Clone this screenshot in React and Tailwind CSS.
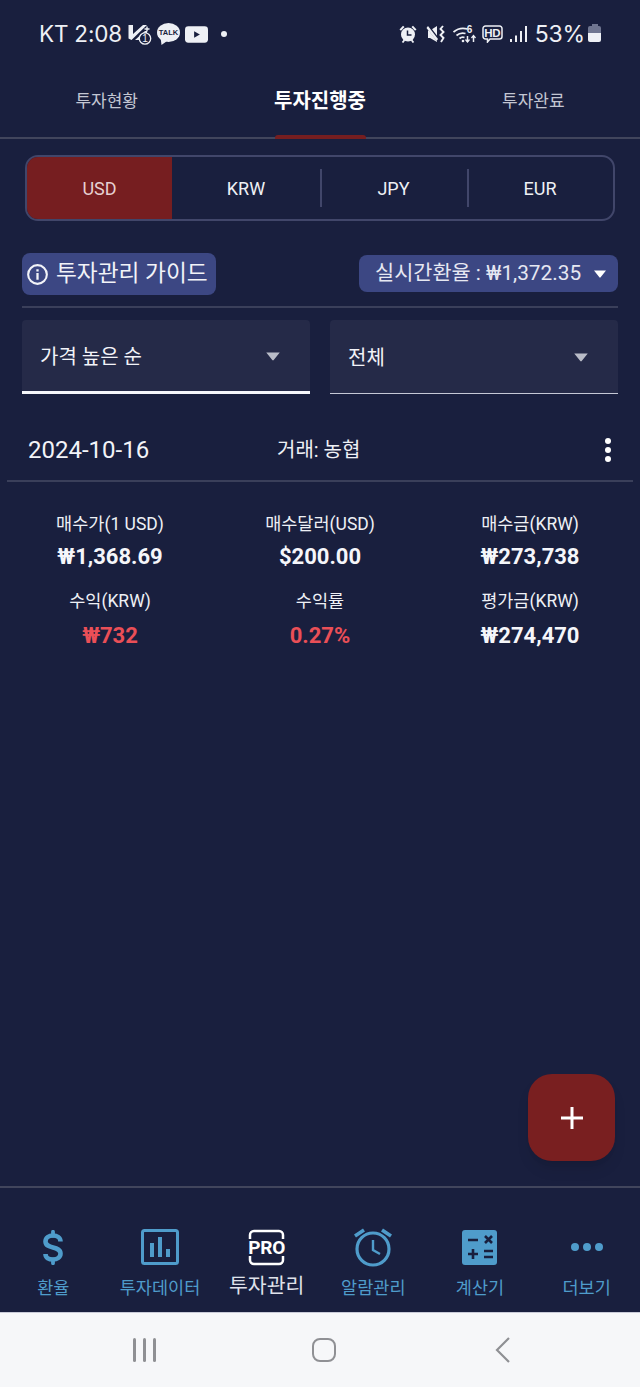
import React from 'react';

const FONT = 'font-[Roboto,"Noto_Sans_CJK_KR",sans-serif]';

const metrics = [
    { label: '매수가(1 USD)', value: '₩1,368.69' },
    { label: '매수달러(USD)', value: '$200.00' },
    { label: '매수금(KRW)', value: '₩273,738' },
    { label: '수익(KRW)', value: '₩732', red: true, low: true },
    { label: '수익률', value: '0.27%', red: true, low: true },
    { label: '평가금(KRW)', value: '₩274,470', low: true },
];

const Caret = ({ className }) => (
    <svg viewBox="0 0 16 10" className={className}>
        <path d="M0.5 0.5h15L8.8 9a1 1 0 0 1-1.6 0z" fill="currentColor" />
    </svg>
);

const StatusBar = () => (
    <div className="h-[68px] flex items-center pl-[39px] pr-[39px] text-[#eef0f5]">
        <span className="text-[22.500px] leading-none font-['Inter',sans-serif] tracking-[-0.2px] w-[89px] whitespace-nowrap">KT 2:08</span>
        {/* missed call style icon */}
        <div className="relative w-[24px] h-[21px] mt-[1px]">
            <svg viewBox="0 0 24 21" className="w-[24px] h-[21px]">
                <path d="M0.500 1h4.500v9L15 1h4L3.500 16 0.500 14.500z" fill="#eef0f5" />
                <path d="M7 16L17 7h2v3l-7 6z" fill="#eef0f5" />
                <path d="M19 2.500v5M16.500 5h5" stroke="#eef0f5" strokeWidth="1.400" />
                <circle cx="17" cy="14.500" r="5.700" fill="#191f3e" stroke="#eef0f5" strokeWidth="1.300" />
            </svg>
            <span className="absolute left-[14px] top-[9px] w-[6px] text-center text-[10px] leading-[11px] font-['Liberation_Sans',sans-serif]">1</span>
        </div>
        {/* kakao talk bubble */}
        <div className="relative w-[23px] h-[22px] ml-[5px]">
            <svg viewBox="0 0 23 22" className="w-[23px] h-[22px]">
                <ellipse cx="11.500" cy="9.500" rx="11.500" ry="9.500" fill="#eef0f5" />
                <path d="M3.500 14l1 8 7-5z" fill="#eef0f5" />
            </svg>
            <span className="absolute left-0 right-0 top-[5px] text-center text-[7.500px] leading-[9px] font-bold text-[#191f3e] font-['Liberation_Sans',sans-serif]">TALK</span>
        </div>
        {/* youtube */}
        <svg viewBox="0 0 24 17" className="w-[23px] h-[17px] ml-[5px]">
            <rect width="24" height="17" rx="3.500" fill="#eef0f5" />
            <path d="M9.500 5l6 3.500-6 3.500z" fill="#191f3e" />
        </svg>
        <div className="w-[6px] h-[6px] rounded-full bg-[#eef0f5] ml-[13px]" />

        <div className="ml-auto flex items-center">
            {/* alarm */}
            <svg viewBox="0 0 18 18" className="w-[18px] h-[18px]">
                <circle cx="9" cy="9.500" r="7" fill="#eef0f5" />
                <path d="M0.500 4.500L4 0.800 5.500 2 2 5.800zM17.500 4.500L14 0.800 12.500 2 16 5.800z" fill="#eef0f5" />
                <path d="M3.500 17.500l2-2.500M14.500 17.500l-2-2.500" stroke="#eef0f5" strokeWidth="1.800" />
                <path d="M8.500 5.500v4.500h4" stroke="#191f3e" strokeWidth="1.500" fill="none" />
            </svg>
            {/* vibrate mute */}
            <svg viewBox="0 0 20 18" className="w-[20px] h-[18px] ml-[9px]">
                <path d="M2 5.500h2L11 1v16l-7-4H2z" fill="#eef0f5" />
                <path d="M1 0.500l12 15.500" stroke="#191f3e" strokeWidth="3.500" />
                <path d="M0.500 3l1.500-2 10 13-1.500 2z" fill="#eef0f5" />
                <path d="M17 1l-2.500 3 3 3-3 3 3 3-2.500 4" stroke="#eef0f5" strokeWidth="1.900" fill="none" />
            </svg>
            {/* wifi */}
            <div className="relative w-[23px] h-[18px] ml-[7px]">
                <svg viewBox="0 0 23 18" className="w-[23px] h-[18px]">
                    <path d="M0.500 7a15 15 0 0 1 14-3M3.500 10.500a9.500 9.500 0 0 1 9-2M6.500 13.500a5 5 0 0 1 5-1" stroke="#eef0f5" strokeWidth="1.700" fill="none" />
                    <circle cx="10" cy="16" r="1.300" fill="#eef0f5" />
                    <path d="M14.500 11v6M20.500 17v-6" stroke="#eef0f5" strokeWidth="1.500" />
                    <path d="M12.500 14.500l2 2.500 2-2.500M18.500 13l2-2.500 2 2.500" stroke="#eef0f5" strokeWidth="1.300" fill="none" />
                </svg>
                <span className="absolute left-[14px] top-[-1px] text-[10px] leading-[11px] font-bold font-['Liberation_Sans',sans-serif]">6</span>
            </div>
            {/* hd */}
            <div className="relative w-[21px] h-[18px] ml-[6px]">
                <svg viewBox="0 0 21 18" className="w-[21px] h-[18px]">
                    <path d="M3.500 1h14a2.500 2.500 0 0 1 2.500 2.500v8a2.500 2.500 0 0 1-2.500 2.500H8l-2.500 3v-3h-2A2.500 2.500 0 0 1 1 11.500v-8A2.500 2.500 0 0 1 3.500 1z" stroke="#eef0f5" strokeWidth="1.500" fill="none" />
                </svg>
                <span className="absolute left-0 right-0 top-[2px] text-center text-[11.500px] leading-[12px] font-bold tracking-[-0.3px] font-['Liberation_Sans',sans-serif]">HD</span>
            </div>
            {/* signal */}
            <svg viewBox="0 0 18 18" className="w-[18px] h-[18px] ml-[6px]">
                <path d="M1 14h2v3H1zM6 10.500h2V17H6zM11 6h2v11h-2zM16 1h2v16h-2z" fill="#eef0f5" />
            </svg>
            <span className="text-[23px] leading-none font-['Inter',sans-serif] tracking-[-0.2px] ml-[8px]">53%</span>
            <div className="w-[13px] h-[20px] ml-[3px] flex flex-col items-center">
                <div className="w-[6px] h-[2px] bg-[#6f7590]" />
                <div className="w-[13px] h-[7px] bg-[#6f7590] rounded-t-[2px]" />
                <div className="w-[13px] h-[9px] bg-[#eef0f5] rounded-b-[2px]" />
            </div>
        </div>
    </div>
);

const TopTabs = () => (
    <div className="h-[71px] grid grid-cols-3 border-b-2 border-[#41455c]">
        <div className="flex items-center justify-center pb-[1px] text-[17px] text-[#c3c6d2]">투자현황</div>
        <div className="relative flex items-center justify-center pb-[3px] text-[20px] font-bold text-white">
            투자진행중
            <div className="absolute left-[62px] -bottom-[2px] w-[91px] h-[4px] rounded-t-[3px] bg-[#761e20]" />
        </div>
        <div className="flex items-center justify-center pb-[1px] text-[17px] text-[#c3c6d2]">투자완료</div>
    </div>
);

const CurrencyTabs = () => (
    <div className="mt-[16px] mx-[25px] h-[66px] rounded-[13px] border-2 border-[#41466a] overflow-hidden grid grid-cols-[145px_148px_147px_146px] text-[18px]">
        <div className="bg-[#761e20] text-[#e6d0d1] flex items-center justify-center">USD</div>
        <div className="flex items-center justify-center text-[#eef0f5]">KRW</div>
        <div className="flex items-center justify-center text-[#eef0f5] relative">
            JPY
            <div className="absolute left-0 top-[12px] bottom-[12px] w-[2px] bg-[#41466a]" />
        </div>
        <div className="flex items-center justify-center text-[#eef0f5] relative">
            EUR
            <div className="absolute left-0 top-[12px] bottom-[12px] w-[2px] bg-[#41466a]" />
        </div>
    </div>
);

const GuideRow = () => (
    <div className="mt-[32px] mx-[22px] h-[55px] flex items-start justify-between border-b-2 border-[#3a3f5a]">
        <div className="h-[42px] w-[194px] rounded-[8px] bg-[#3c4783] flex items-center pl-[5px] text-[22.700px] text-[#f2f3f8] whitespace-nowrap">
            <svg viewBox="0 0 22 22" className="w-[21px] h-[21px] mr-[8px] shrink-0">
                <circle cx="11" cy="11" r="9.800" fill="none" stroke="#f2f3f8" strokeWidth="2.200" />
                <path d="M9.800 9.500h2.400v7H9.800zM9.800 5.500h2.400v2.400H9.800z" fill="#f2f3f8" />
            </svg>
            투자관리 가이드
        </div>
        <div className="mt-[2px] h-[37px] w-[259px] rounded-[8px] bg-[#3c4783] flex items-center pl-[16px] text-[20.800px] text-[#e6e8f2] whitespace-nowrap">
            실시간환율 : ₩1,372.35
            <Caret className="w-[14px] h-[8px] ml-[12px] text-white" />
        </div>
    </div>
);

const Filter = ({ label, active }) => (
    <div className={`h-[74px] rounded-t-[4px] bg-[#252a48] flex items-center justify-between pt-[2px] pl-[18px] pr-[29px] text-[20px] text-[#f2f3f8] ${active ? 'border-b-[3px] border-[#f5f6fa]' : 'border-b-[1.5px] border-[#c5c8d6]'}`}>
        <span>{label}</span>
        <Caret className="w-[16px] h-[9px] text-[#b9bcc8]" />
    </div>
);

const TradeCard = () => (
    <div>
        <div className="h-[88px] mx-[7px] flex items-center border-b-2 border-[#3a3f5a] pt-[26px]">
            <span className="pl-[21px] text-[24px] text-[#f2f3f8] w-[270px]">2024-10-16</span>
            <span className="text-[20px] text-[#eef0f5]">거래: 농협</span>
            <div className="ml-auto mr-[22px] flex flex-col gap-[3px]">
                <div className="w-[6px] h-[6px] rounded-full bg-white" />
                <div className="w-[6px] h-[6px] rounded-full bg-white" />
                <div className="w-[6px] h-[6px] rounded-full bg-white" />
            </div>
        </div>
        <div className="mt-[29px] px-[5px] grid grid-cols-3 gap-y-[17px]">
            {metrics.map((m) => (
                <div key={m.label} className="flex flex-col items-center">
                    <span className="text-[17.500px] leading-[26px] text-[#eef0f5]">{m.label}</span>
                    <span className={`${m.low ? 'mt-[8px]' : 'mt-[6px]'} text-[22px] leading-[28px] font-bold ${m.red ? 'text-[#ea4f57]' : 'text-[#f5f6fa]'}`}>{m.value}</span>
                </div>
            ))}
        </div>
    </div>
);

const BLUE = '#4f9ccb';

const navItems = [
    {
        label: '환율',
        icon: (
            <svg viewBox="0 0 20 35" className="w-[20px] h-[35px]">
                <path d="M10 1.800v4M10 29.500v3.700" stroke={BLUE} strokeWidth="3.800" strokeLinecap="round" />
                <path d="M17.500 11.500C17.500 7.500 14 5.500 10 5.500S2.500 7.500 2.500 11.500 6 16.500 10 17.500 17.500 19.500 17.500 23.500 14 29.500 10 29.500 2.500 28 2.500 24" fill="none" stroke={BLUE} strokeWidth="4.600" />
            </svg>
        ),
    },
    {
        label: '투자데이터',
        icon: (
            <svg viewBox="0 0 38 36" className="w-[38px] h-[36px]">
                <rect x="1.500" y="1.500" width="35" height="33" rx="2" fill="none" stroke={BLUE} strokeWidth="3" />
                <path d="M9 14h4v14H9zM17 8h4v20h-4zM25 20h4v8h-4z" fill={BLUE} />
            </svg>
        ),
    },
    {
        label: '투자관리',
        active: true,
        icon: (
            <div className="relative w-[37px] h-[37px]">
                <svg viewBox="0 0 37 37" className="w-[37px] h-[37px]">
                    <path d="M2 10V6a4 4 0 0 1 4-4h25a4 4 0 0 1 4 4v4M2 27v4a4 4 0 0 0 4 4h25a4 4 0 0 0 4-4v-4" fill="none" stroke="#fff" strokeWidth="2.500" />
                </svg>
                <span className="absolute left-[-3px] right-[-3px] top-[8px] text-center text-[19px] leading-[21px] font-bold text-white tracking-[-0.2px]">PRO</span>
            </div>
        ),
    },
    {
        label: '알람관리',
        icon: (
            <svg viewBox="0 0 40 40" className="w-[40px] h-[40px]">
                <circle cx="20" cy="22" r="16" fill="none" stroke={BLUE} strokeWidth="3.200" />
                <path d="M2 9l9-6M38 9l-9-6" stroke={BLUE} strokeWidth="3.600" />
                <path d="M20 13v10l7 4" fill="none" stroke={BLUE} strokeWidth="2.400" />
            </svg>
        ),
    },
    {
        label: '계산기',
        icon: (
            <svg viewBox="0 0 35 35" className="w-[35px] h-[35px]">
                <rect width="35" height="35" rx="3" fill={BLUE} />
                <path d="M6 10h10M6 24h10M11 19v10M22 21h9M22 27h9M23 6l7 7M30 6l-7 7" stroke="#191f3e" strokeWidth="2.600" />
            </svg>
        ),
    },
    {
        label: '더보기',
        icon: (
            <div className="flex gap-[4px]">
                <div className="w-[8px] h-[8px] rounded-full bg-[#4f9ccb]" />
                <div className="w-[8px] h-[8px] rounded-full bg-[#4f9ccb]" />
                <div className="w-[8px] h-[8px] rounded-full bg-[#4f9ccb]" />
            </div>
        ),
    },
];

const BottomNav = () => (
    <div className="h-[126px] border-t-2 border-[#41455c] grid grid-cols-6">
        {navItems.map((item) => (
            <div key={item.label} className="flex flex-col items-center">
                <div className="h-[42px] mt-[38px] flex items-center justify-center">{item.icon}</div>
                <span className={`${item.active ? 'text-[20.500px] text-[#dfe1ea] mt-[6px]' : 'text-[17.500px] text-[#4f9ccb] mt-[8px]'} leading-[24px] whitespace-nowrap`}>{item.label}</span>
            </div>
        ))}
    </div>
);

const SystemNav = () => (
    <div className="h-[75px] bg-[#f6f7f9] border-t border-[#c9cbd8] grid grid-cols-[179px_179px_179px] items-center pl-[55px]">
        <div className="flex justify-center gap-[7px]">
            <div className="w-[3px] h-[24px] bg-[#8f9094] rounded-full" />
            <div className="w-[3px] h-[24px] bg-[#8f9094] rounded-full" />
            <div className="w-[3px] h-[24px] bg-[#8f9094] rounded-full" />
        </div>
        <div className="flex justify-center">
            <div className="w-[24px] h-[24px] rounded-[8px] border-[2.500px] border-[#8f9094]" />
        </div>
        <div className="flex justify-center">
            <svg viewBox="0 0 15 26" className="w-[15px] h-[26px]">
                <path d="M14 1L2 13l12 12" fill="none" stroke="#8f9094" strokeWidth="2.200" />
            </svg>
        </div>
    </div>
);

const App = () => {
    return (
        <div className={`${FONT} relative w-[640px] h-[1387px] bg-[#191f3e] flex flex-col overflow-hidden`}>
            <StatusBar />
            <TopTabs />
            <CurrencyTabs />
            <GuideRow />
            <div className="mt-[12px] mx-[22px] grid grid-cols-2 gap-[20px]">
                <Filter label="가격 높은 순" active />
                <Filter label="전체" />
            </div>
            <div className="flex-1">
                <TradeCard />
            </div>
            <button className="absolute left-[528px] top-[1074px] w-[87px] h-[87px] rounded-[24px] bg-[#791f20] flex items-center justify-center shadow-lg">
                <svg viewBox="0 0 24 24" className="w-[24px] h-[24px]">
                    <path d="M12 1v22M1 12h22" stroke="#fff" strokeWidth="3" />
                </svg>
            </button>
            <BottomNav />
            <SystemNav />
        </div>
    );
};

export default App;
